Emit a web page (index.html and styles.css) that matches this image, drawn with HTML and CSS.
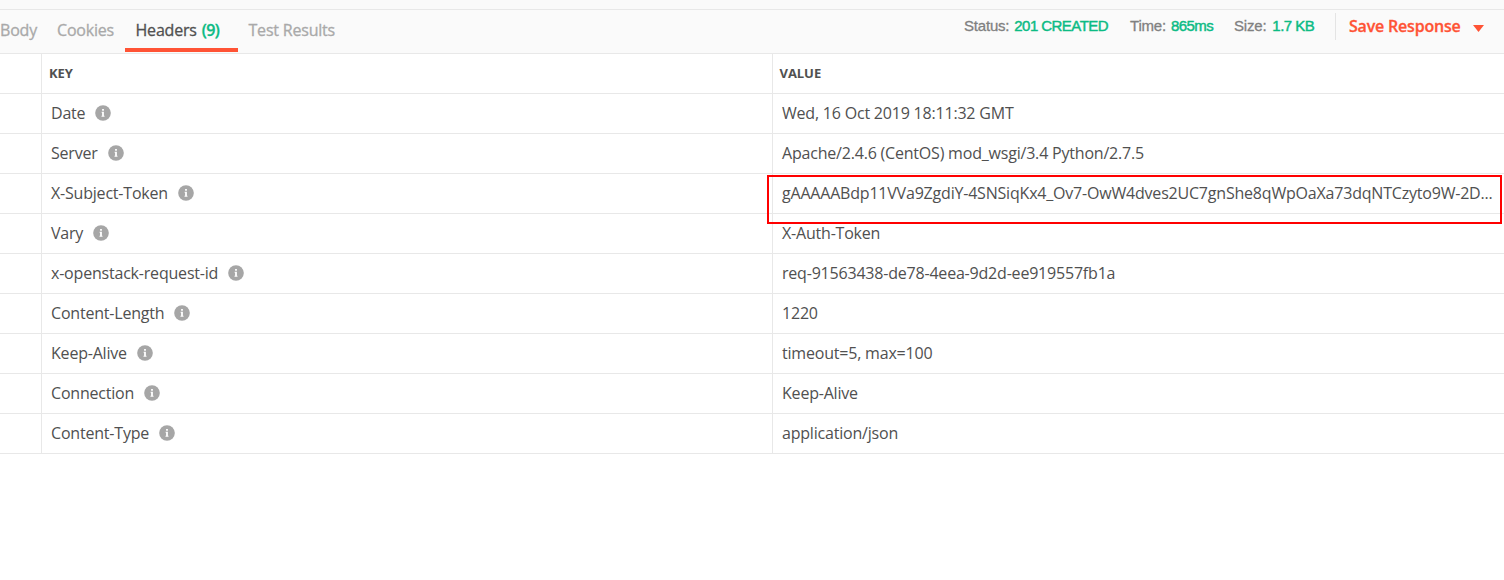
FILE: index.html
```html
<!DOCTYPE html>
<html lang="en">
<head>
<meta charset="utf-8">
<title>Response headers</title>
<link rel="stylesheet" href="styles.css">
</head>
<body>
<svg width="0" height="0" class="defs">
  <symbol id="info" viewBox="0 0 16 16">
    <circle cx="8" cy="8" r="7.8" fill="#a6a6a6"/>
    <path fill="#fff" d="M7.1 4.1h1.8v1.6H7.1zM6.6 6.8h2.3v4h.6v1h-3v-1h.6V7.8h-.5z"/>
  </symbol>
</svg>
<header class="bar">
  <nav class="tabs">
    <a class="tab tab-body">Body</a>
    <a class="tab tab-cookies">Cookies</a>
    <a class="tab tab-headers active">Headers <span class="count">(9)</span></a>
    <a class="tab tab-tests">Test Results</a>
  </nav>
  <div class="meta">
    <div class="stat status"><span>Status:</span><b>201 CREATED</b></div>
    <div class="stat time"><span>Time:</span><b>865ms</b></div>
    <div class="stat size"><span>Size:</span><b>1.7 KB</b></div>
    <div class="save"><span>Save Response</span><svg width="11" height="7" viewBox="0 0 11 7"><path fill="#ff5335" d="M0 0h11L5.500 7z"/></svg></div>
  </div>
</header>
<main class="table">
  <div class="row head"><div class="check"></div><div class="key">KEY</div><div class="value">VALUE</div></div>
  <div class="row"><div class="check"></div><div class="key"><span>Date</span><svg class="info"><use href="#info"/></svg></div><div class="value"><span>Wed, 16 Oct 2019 18:11:32 GMT</span></div></div>
  <div class="row"><div class="check"></div><div class="key"><span>Server</span><svg class="info"><use href="#info"/></svg></div><div class="value"><span>Apache/2.4.6 (CentOS) mod_wsgi/3.4 Python/2.7.5</span></div></div>
  <div class="row"><div class="check"></div><div class="key"><span>X-Subject-Token</span><svg class="info"><use href="#info"/></svg></div><div class="value marked"><span>gAAAAABdp11VVa9ZgdiY-4SNSiqKx4_Ov7-OwW4dves2UC7gnShe8qWpOaXa73dqNTCzyto9W-2D...</span></div></div>
  <div class="row"><div class="check"></div><div class="key"><span>Vary</span><svg class="info"><use href="#info"/></svg></div><div class="value"><span>X-Auth-Token</span></div></div>
  <div class="row"><div class="check"></div><div class="key"><span>x-openstack-request-id</span><svg class="info"><use href="#info"/></svg></div><div class="value"><span>req-91563438-de78-4eea-9d2d-ee919557fb1a</span></div></div>
  <div class="row"><div class="check"></div><div class="key"><span>Content-Length</span><svg class="info"><use href="#info"/></svg></div><div class="value"><span>1220</span></div></div>
  <div class="row"><div class="check"></div><div class="key"><span>Keep-Alive</span><svg class="info"><use href="#info"/></svg></div><div class="value"><span>timeout=5, max=100</span></div></div>
  <div class="row"><div class="check"></div><div class="key"><span>Connection</span><svg class="info"><use href="#info"/></svg></div><div class="value"><span>Keep-Alive</span></div></div>
  <div class="row"><div class="check"></div><div class="key"><span>Content-Type</span><svg class="info"><use href="#info"/></svg></div><div class="value"><span>application/json</span></div></div>
</main>
</body>
</html>
```
FILE: styles.css
```css
*, *::after { box-sizing: border-box; }
body {
  margin: 0;
  background: #fff;
  color: #505050;
  font: 16px/24px "Open Sans", sans-serif;
  letter-spacing: -0.2px;
  overflow: hidden;
}
.defs { display: block; height: 0; }
.bar {
  display: flex;
  justify-content: space-between;
  height: 54px;
  padding-top: 9px;
  background: linear-gradient(#e8e8e8, #e8e8e8) 0 9px / 100% 1px no-repeat #fafafa;
  border-bottom: 1px solid #e8e8e8;
}
.tabs { display: flex; height: 43px; }
.tab {
  padding: 9px 10px 0 10.5px;
  border-bottom: 4px solid transparent;
  color: #a9a9a9;
  -webkit-text-stroke: 0.3px;
  white-space: nowrap;
}
.tab-body { width: 46px; padding-left: 0; }
.tab-cookies { width: 79px; padding-left: 11px; }
.tab-headers { width: 113px; }
.active { color: #505050; border-color: #ff5335; }
.count { color: #0cbb84; margin-left: 1px; font-weight: 600; letter-spacing: -0.6px; }
.meta {
  display: flex;
  padding-top: 4px;
  height: 31px;
  line-height: 26px;
  white-space: nowrap;
}
.stat {
  display: flex;
  gap: 5px;
  font-family: "Liberation Sans", Arial, sans-serif;
  font-size: 15px;
  color: #808080;
  -webkit-text-stroke: 0.3px;
}
.stat b { font-weight: 400; color: #0cbb84; letter-spacing: -0.55px; -webkit-text-stroke: 0.45px; }
.status { width: 166px; }
.time { width: 104px; }
.size { width: 101px; gap: 6px; }
.save {
  display: flex;
  align-items: center;
  gap: 12px;
  width: 169px;
  padding-left: 13px;
  border-left: 1px solid #e4e4e4;
  color: #ff5335;
  font-weight: 600;
  -webkit-text-stroke: 0.3px;
}
.save span { padding-bottom: 2px; }
.save svg { margin-top: 3px; }
.row {
  display: flex;
  height: 40px;
  border-bottom: 1px solid #e8e8e8;
}
.check { flex: none; width: 41px; }
.key, .value {
  display: flex;
  align-items: center;
  border-left: 1px solid #e8e8e8;
  padding: 0 0 2px 9px;
  white-space: nowrap;
}
.key { flex: none; width: 731px; }
.value { flex: 1; min-width: 0; position: relative; }
.head { font-size: 13px; font-weight: 700; letter-spacing: -0.05px; }
.head .key { padding-left: 7px; }
.head .value { padding-left: 6.5px; }
.info { width: 16px; height: 16px; margin-left: 10px; }
.marked::after {
  content: "";
  position: absolute;
  left: -6px;
  top: 1px;
  width: 735px;
  height: 49px;
  border: 2px solid #f00;
  z-index: 1;
}
```
